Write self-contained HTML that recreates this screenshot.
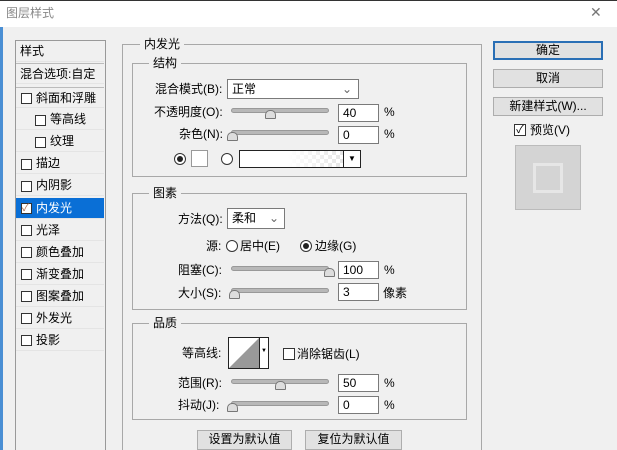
<!DOCTYPE html><html><head><meta charset="utf-8"><style>
*{margin:0;padding:0;box-sizing:border-box}
html{width:617px;height:450px;overflow:hidden}
body{width:617px;height:450px;overflow:hidden;background:#f0f0f0;font-family:"Liberation Sans","Noto Sans CJK SC",sans-serif;font-size:12px;color:#000;position:relative}
.a{position:absolute;white-space:nowrap;line-height:14px}
.title{position:absolute;left:0;top:0;width:617px;height:27px;background:#fff;border-top:1px solid #333}
.edge{position:absolute;left:0;top:27px;width:3px;height:423px;background:#4a8fd4}
.box{position:absolute;border:1px solid #a8a8a8}
.lg{position:absolute;background:#f0f0f0;padding:0 4px;line-height:14px}
.cb{position:absolute;width:11px;height:11px;border:1px solid #333;background:#fff}
.inp{position:absolute;height:18px;border:1px solid #7a7a7a;background:#fff;padding-left:4px;line-height:16px}
.trk{position:absolute;height:5px;border-radius:3px;background:#b8b8b8;border:1px solid #999}
.th{position:absolute;width:11px;height:9px;background:#ddd;border:1px solid #777;border-radius:5px 5px 1px 1px}
.btn{position:absolute;height:19px;border:1px solid #adadad;background:#e1e1e1;text-align:center;line-height:17px}
.li{position:absolute;left:16px;width:88px;height:21px;border-bottom:1px solid #e4e4e4;line-height:21px;padding-left:4px}
.rad{position:absolute;width:12px;height:12px;border:1px solid #333;border-radius:50%;background:#fff}
.rad.on::after{content:"";position:absolute;left:2px;top:2px;width:6px;height:6px;border-radius:50%;background:#222}
</style></head><body>
<div class="title"></div>
<div class="a" style="left:6px;top:6px;color:#888;font-size:12px">图层样式</div>
<div class="a" style="left:590px;top:5px;color:#777;font-size:14px">✕</div>
<div class="edge"></div>
<div class="box" style="left:15px;top:40px;width:91px;height:411px;border-color:#999;border-bottom:none;background:#f0f0f0"></div>
<div class="li" style="top:41px">样式</div>
<div class="li" style="top:63px;border-top:1px solid #bbb">混合选项:自定</div>
<div class="li" style="top:87px;border-top:1px solid #bbb;padding-left:20px">斜面和浮雕</div><div class="cb" style="left:21px;top:93px"></div>
<div class="li" style="top:109px;padding-left:34px">等高线</div><div class="cb" style="left:35px;top:115px"></div>
<div class="li" style="top:131px;padding-left:34px">纹理</div><div class="cb" style="left:35px;top:137px"></div>
<div class="li" style="top:153px;padding-left:20px">描边</div><div class="cb" style="left:21px;top:159px"></div>
<div class="li" style="top:175px;padding-left:20px">内阴影</div><div class="cb" style="left:21px;top:181px"></div>
<div class="li" style="top:198px;padding-left:20px;background:#0a6fd6;color:#fff">内发光</div><div class="cb" style="left:21px;top:203px;font-size:10px;line-height:9px;color:#a64">✓</div>
<div class="li" style="top:220px;padding-left:20px">光泽</div><div class="cb" style="left:21px;top:225px"></div>
<div class="li" style="top:242px;padding-left:20px">颜色叠加</div><div class="cb" style="left:21px;top:247px"></div>
<div class="li" style="top:264px;padding-left:20px">渐变叠加</div><div class="cb" style="left:21px;top:269px"></div>
<div class="li" style="top:286px;padding-left:20px">图案叠加</div><div class="cb" style="left:21px;top:291px"></div>
<div class="li" style="top:308px;padding-left:20px">外发光</div><div class="cb" style="left:21px;top:313px"></div>
<div class="li" style="top:330px;padding-left:20px">投影</div><div class="cb" style="left:21px;top:335px"></div>
<div class="box" style="left:122px;top:44px;width:360px;height:407px;border-bottom:none"></div>
<div class="lg" style="left:140px;top:37px">内发光</div>
<div class="box" style="left:132px;top:63px;width:335px;height:114px"></div>
<div class="lg" style="left:149px;top:56px">结构</div>
<div class="a" style="left:155px;top:82px">混合模式(B):</div>
<div class="inp" style="left:227px;top:79px;width:132px;height:20px;line-height:18px">正常<span style="position:absolute;right:6px;top:0;color:#666">⌄</span></div>
<div class="a" style="left:154px;top:105px">不透明度(O):</div>
<div class="trk" style="left:231px;top:108px;width:98px"></div><div class="th" style="left:265px;top:110px"></div>
<div class="inp" style="left:338px;top:104px;width:41px">40</div><div class="a" style="left:384px;top:105px">%</div>
<div class="a" style="left:179px;top:127px">杂色(N):</div>
<div class="trk" style="left:231px;top:130px;width:98px"></div><div class="th" style="left:227px;top:132px"></div>
<div class="inp" style="left:338px;top:126px;width:41px">0</div><div class="a" style="left:384px;top:127px">%</div>
<div class="rad on" style="left:174px;top:153px"></div>
<div style="position:absolute;left:191px;top:150px;width:17px;height:17px;border:1px solid #999;background:#fff"></div>
<div class="rad" style="left:221px;top:153px"></div>
<div style="position:absolute;left:239px;top:150px;width:122px;height:18px;border:1px solid #222;background:linear-gradient(90deg,#fff 40%,rgba(255,255,255,0)),repeating-conic-gradient(#ddd 0 25%,#fff 0 50%) 0 0/8px 8px"></div>
<div style="position:absolute;left:343px;top:151px;width:17px;height:16px;background:#fff;border-left:1px solid #222;text-align:center;font-size:8px;line-height:16px">▼</div>
<div class="box" style="left:132px;top:193px;width:335px;height:117px"></div>
<div class="lg" style="left:149px;top:186px">图素</div>
<div class="a" style="left:178px;top:212px">方法(Q):</div>
<div class="inp" style="left:227px;top:208px;width:58px;height:21px;line-height:19px">柔和<span style="position:absolute;right:5px;top:0;color:#666">⌄</span></div>
<div class="a" style="left:206px;top:239px">源:</div>
<div class="rad" style="left:226px;top:240px"></div><div class="a" style="left:240px;top:239px">居中(E)</div>
<div class="rad on" style="left:300px;top:240px"></div><div class="a" style="left:315px;top:239px">边缘(G)</div>
<div class="a" style="left:178px;top:263px">阻塞(C):</div>
<div class="trk" style="left:231px;top:266px;width:98px"></div><div class="th" style="left:324px;top:268px"></div>
<div class="inp" style="left:338px;top:261px;width:41px">100</div><div class="a" style="left:384px;top:263px">%</div>
<div class="a" style="left:178px;top:286px">大小(S):</div>
<div class="trk" style="left:231px;top:288px;width:98px"></div><div class="th" style="left:229px;top:290px"></div>
<div class="inp" style="left:338px;top:283px;width:41px">3</div><div class="a" style="left:383px;top:286px">像素</div>
<div class="box" style="left:132px;top:323px;width:335px;height:97px"></div>
<div class="lg" style="left:149px;top:316px">品质</div>
<div class="a" style="left:182px;top:346px">等高线:</div>
<div style="position:absolute;left:228px;top:337px;width:41px;height:32px;border:1px solid #222;background:#fff"></div>
<svg style="position:absolute;left:229px;top:338px" width="30" height="30"><polygon points="0,30 30,0 30,30" fill="#999"/></svg>
<div style="position:absolute;left:259px;top:338px;width:9px;height:30px;border-left:1px solid #222;font-size:6px;text-align:center;line-height:26px;background:#fff">▼</div>
<div class="cb" style="left:283px;top:348px;width:12px;height:12px"></div><div class="a" style="left:297px;top:347px">消除锯齿(L)</div>
<div class="a" style="left:178px;top:376px">范围(R):</div>
<div class="trk" style="left:231px;top:379px;width:98px"></div><div class="th" style="left:275px;top:381px"></div>
<div class="inp" style="left:338px;top:374px;width:41px">50</div><div class="a" style="left:384px;top:376px">%</div>
<div class="a" style="left:178px;top:398px">抖动(J):</div>
<div class="trk" style="left:231px;top:401px;width:98px"></div><div class="th" style="left:227px;top:403px"></div>
<div class="inp" style="left:338px;top:396px;width:41px">0</div><div class="a" style="left:384px;top:398px">%</div>
<div class="btn" style="left:197px;top:430px;width:95px;height:20px">设置为默认值</div>
<div class="btn" style="left:305px;top:430px;width:97px;height:20px">复位为默认值</div>
<div class="btn" style="left:493px;top:41px;width:110px;border:2px solid #2a6fb5;line-height:15px">确定</div>
<div class="btn" style="left:493px;top:69px;width:110px">取消</div>
<div class="btn" style="left:493px;top:97px;width:110px">新建样式(W)...</div>
<div class="cb" style="left:514px;top:124px;width:12px;height:12px;font-size:11px;line-height:10px;text-align:center">✓</div>
<div class="a" style="left:530px;top:123px">预览(V)</div>
<div style="position:absolute;left:515px;top:145px;width:66px;height:65px;border:1px solid #bbb;background:#d4d4d4"></div>
<div style="position:absolute;left:533px;top:163px;width:30px;height:30px;border:3px solid #e6e6e6"></div>
</body></html>
